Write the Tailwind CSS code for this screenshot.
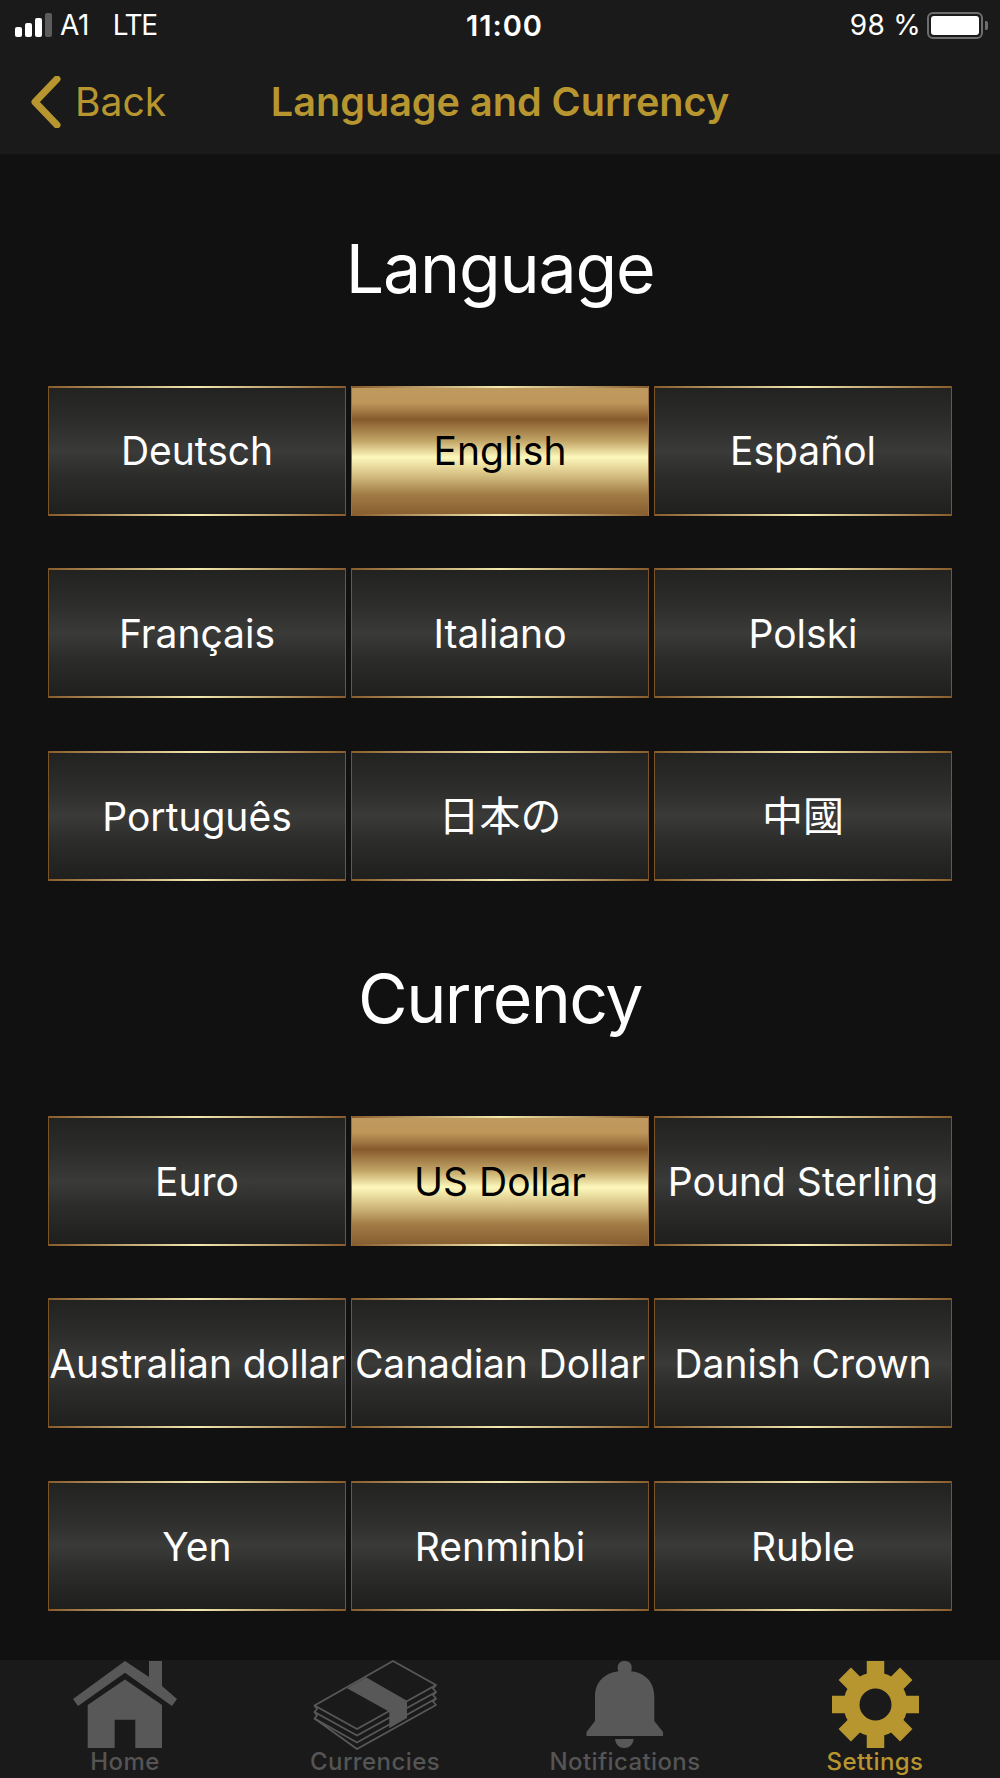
<!DOCTYPE html>
<html lang="en">
<head>
    <meta charset="UTF-8">
    <meta name="viewport" content="width=device-width, initial-scale=1.0">
    <title>Language and Currency</title>
    <script src="https://cdn.jsdelivr.net/npm/@tailwindcss/browser@4"></script>
</head>
<body class="bg-[#111111] font-['Inter','Noto_Sans_CJK_JP',sans-serif] text-white">
    <div class="w-[1000px] h-[1778px] flex flex-col overflow-hidden">
        <!-- Status bar + nav -->
        <header class="h-[154px] shrink-0 bg-[#1a1a1a]">
            <div class="h-[50px] grid grid-cols-[1fr_auto_1fr] items-center pl-[15px] pr-[12px]">
                <div class="flex items-center">
                    <div class="flex items-end gap-[3px] h-[24px] mb-[1px]">
                        <span class="w-[7px] h-[10px] bg-white rounded-[2px]"></span>
                        <span class="w-[7px] h-[14px] bg-white rounded-[2px]"></span>
                        <span class="w-[7px] h-[19px] bg-white rounded-[2px]"></span>
                        <span class="w-[7px] h-[24px] bg-[#5c5c5c] rounded-[2px]"></span>
                    </div>
                    <span class="ml-[8px] text-[28px] leading-none tracking-[-0.5px]">A1</span>
                    <span class="ml-[24px] text-[28px] leading-none tracking-[-1.4px]">LTE</span>
                </div>
                <div class="ml-[6px] text-[29px] leading-none font-semibold tracking-[1px]">11:00</div>
                <div class="flex items-center justify-end">
                    <span class="text-[28px] leading-none tracking-[0.3px]">98 %</span>
                    <div class="ml-[6px] w-[56px] h-[27px] border-[2px] border-[#6e6e6e] rounded-[6px] p-[2px]">
                        <div class="w-full h-full bg-white rounded-[3px]"></div>
                    </div>
                    <div class="ml-[2px] w-[3px] h-[9px] bg-[#6e6e6e] rounded-r-[2px]"></div>
                </div>
            </div>
            <div class="h-[104px] grid grid-cols-[1fr_auto_1fr] items-center text-[#b8962f] text-[39px] leading-none">
                <div class="flex items-center pl-[30px]">
                    <svg class="w-[34px] h-[52px]" viewBox="0 0 34 52" fill="none" stroke="#b8962f" stroke-width="7" stroke-linecap="round" stroke-linejoin="round"><path d="M27 3 L5 26 L27 49"/></svg>
                    <span class="ml-[11px] -mt-[1px]">Back</span>
                </div>
                <div class="mt-[1px] text-[39.6px] font-semibold">Language and Currency</div>
                <div></div>
            </div>
        </header>

        <main class="flex-1">
            <h2 class="h-[231.7px] pb-[3px] flex items-center justify-center text-[68px] leading-none font-normal tracking-[-1.2px]">Language</h2>
            <div class="grid grid-cols-3 gap-x-[5px] gap-y-[52.6px] px-[48px] [&>div>div]:pt-[2px]">
                <div class="h-[130px] border-x border-[#7c5428] bg-[linear-gradient(90deg,#8a5c2c,#f3eab0_50%,#8a5c2c)] py-[2px]"><div class="h-full flex items-center justify-center whitespace-nowrap text-[39px] bg-[linear-gradient(180deg,#222221,#2e2e2d_30%,#3a3a39_50%,#2c2c2b_70%,#1f1f1e)]">Deutsch</div></div>
                <div class="h-[130px] border-x border-[#9a7040] bg-[linear-gradient(90deg,#8a5c2c,#f3eab0_50%,#8a5c2c)] py-[2px]"><div class="h-full flex items-center justify-center whitespace-nowrap text-[39px] text-black bg-[linear-gradient(180deg,#bf9a5e,#bd965a_12%,#875a2c_25%,#c2a566_42%,#fdf8bc_55%,#d9c486_68%,#a07a44_85%,#875f32)]">English</div></div>
                <div class="h-[130px] border-x border-[#7c5428] bg-[linear-gradient(90deg,#8a5c2c,#f3eab0_50%,#8a5c2c)] py-[2px]"><div class="h-full flex items-center justify-center whitespace-nowrap text-[39px] bg-[linear-gradient(180deg,#222221,#2e2e2d_30%,#3a3a39_50%,#2c2c2b_70%,#1f1f1e)]">Español</div></div>
                <div class="h-[130px] border-x border-[#7c5428] bg-[linear-gradient(90deg,#8a5c2c,#f3eab0_50%,#8a5c2c)] py-[2px]"><div class="h-full flex items-center justify-center whitespace-nowrap text-[39px] bg-[linear-gradient(180deg,#222221,#2e2e2d_30%,#3a3a39_50%,#2c2c2b_70%,#1f1f1e)]">Français</div></div>
                <div class="h-[130px] border-x border-[#7c5428] bg-[linear-gradient(90deg,#8a5c2c,#f3eab0_50%,#8a5c2c)] py-[2px]"><div class="h-full flex items-center justify-center whitespace-nowrap text-[39px] bg-[linear-gradient(180deg,#222221,#2e2e2d_30%,#3a3a39_50%,#2c2c2b_70%,#1f1f1e)]">Italiano</div></div>
                <div class="h-[130px] border-x border-[#7c5428] bg-[linear-gradient(90deg,#8a5c2c,#f3eab0_50%,#8a5c2c)] py-[2px]"><div class="h-full flex items-center justify-center whitespace-nowrap text-[39px] bg-[linear-gradient(180deg,#222221,#2e2e2d_30%,#3a3a39_50%,#2c2c2b_70%,#1f1f1e)]">Polski</div></div>
                <div class="h-[130px] border-x border-[#7c5428] bg-[linear-gradient(90deg,#8a5c2c,#f3eab0_50%,#8a5c2c)] py-[2px]"><div class="h-full flex items-center justify-center whitespace-nowrap text-[39px] bg-[linear-gradient(180deg,#222221,#2e2e2d_30%,#3a3a39_50%,#2c2c2b_70%,#1f1f1e)]">Português</div></div>
                <div class="h-[130px] border-x border-[#7c5428] bg-[linear-gradient(90deg,#8a5c2c,#f3eab0_50%,#8a5c2c)] py-[2px]"><div lang="ja" class="h-full flex items-center justify-center whitespace-nowrap text-[41px] bg-[linear-gradient(180deg,#222221,#2e2e2d_30%,#3a3a39_50%,#2c2c2b_70%,#1f1f1e)]">日本の</div></div>
                <div class="h-[130px] border-x border-[#7c5428] bg-[linear-gradient(90deg,#8a5c2c,#f3eab0_50%,#8a5c2c)] py-[2px]"><div lang="zh-Hant" class="h-full flex items-center justify-center whitespace-nowrap text-[41px] bg-[linear-gradient(180deg,#222221,#2e2e2d_30%,#3a3a39_50%,#2c2c2b_70%,#1f1f1e)]">中國</div></div>
            </div>

            <h2 class="h-[235px] flex items-center justify-center text-[68px] leading-none font-normal tracking-[-1.6px]">Currency</h2>
            <div class="grid grid-cols-3 gap-x-[5px] gap-y-[52.6px] px-[48px] [&>div>div]:pt-[2px]">
                <div class="h-[130px] border-x border-[#7c5428] bg-[linear-gradient(90deg,#8a5c2c,#f3eab0_50%,#8a5c2c)] py-[2px]"><div class="h-full flex items-center justify-center whitespace-nowrap text-[39px] bg-[linear-gradient(180deg,#222221,#2e2e2d_30%,#3a3a39_50%,#2c2c2b_70%,#1f1f1e)]">Euro</div></div>
                <div class="h-[130px] border-x border-[#9a7040] bg-[linear-gradient(90deg,#8a5c2c,#f3eab0_50%,#8a5c2c)] py-[2px]"><div class="h-full flex items-center justify-center whitespace-nowrap text-[39px] text-black bg-[linear-gradient(180deg,#bf9a5e,#bd965a_12%,#875a2c_25%,#c2a566_42%,#fdf8bc_55%,#d9c486_68%,#a07a44_85%,#875f32)]">US Dollar</div></div>
                <div class="h-[130px] border-x border-[#7c5428] bg-[linear-gradient(90deg,#8a5c2c,#f3eab0_50%,#8a5c2c)] py-[2px]"><div class="h-full flex items-center justify-center whitespace-nowrap text-[39px] bg-[linear-gradient(180deg,#222221,#2e2e2d_30%,#3a3a39_50%,#2c2c2b_70%,#1f1f1e)]">Pound Sterling</div></div>
                <div class="h-[130px] border-x border-[#7c5428] bg-[linear-gradient(90deg,#8a5c2c,#f3eab0_50%,#8a5c2c)] py-[2px]"><div class="h-full flex items-center justify-center whitespace-nowrap text-[39px] tracking-[-0.1px] bg-[linear-gradient(180deg,#222221,#2e2e2d_30%,#3a3a39_50%,#2c2c2b_70%,#1f1f1e)]">Australian dollar</div></div>
                <div class="h-[130px] border-x border-[#7c5428] bg-[linear-gradient(90deg,#8a5c2c,#f3eab0_50%,#8a5c2c)] py-[2px]"><div class="h-full flex items-center justify-center whitespace-nowrap text-[39px] tracking-[-0.1px] bg-[linear-gradient(180deg,#222221,#2e2e2d_30%,#3a3a39_50%,#2c2c2b_70%,#1f1f1e)]">Canadian Dollar</div></div>
                <div class="h-[130px] border-x border-[#7c5428] bg-[linear-gradient(90deg,#8a5c2c,#f3eab0_50%,#8a5c2c)] py-[2px]"><div class="h-full flex items-center justify-center whitespace-nowrap text-[39px] bg-[linear-gradient(180deg,#222221,#2e2e2d_30%,#3a3a39_50%,#2c2c2b_70%,#1f1f1e)]">Danish Crown</div></div>
                <div class="h-[130px] border-x border-[#7c5428] bg-[linear-gradient(90deg,#8a5c2c,#f3eab0_50%,#8a5c2c)] py-[2px]"><div class="h-full flex items-center justify-center whitespace-nowrap text-[39px] bg-[linear-gradient(180deg,#222221,#2e2e2d_30%,#3a3a39_50%,#2c2c2b_70%,#1f1f1e)]">Yen</div></div>
                <div class="h-[130px] border-x border-[#7c5428] bg-[linear-gradient(90deg,#8a5c2c,#f3eab0_50%,#8a5c2c)] py-[2px]"><div class="h-full flex items-center justify-center whitespace-nowrap text-[39px] bg-[linear-gradient(180deg,#222221,#2e2e2d_30%,#3a3a39_50%,#2c2c2b_70%,#1f1f1e)]">Renminbi</div></div>
                <div class="h-[130px] border-x border-[#7c5428] bg-[linear-gradient(90deg,#8a5c2c,#f3eab0_50%,#8a5c2c)] py-[2px]"><div class="h-full flex items-center justify-center whitespace-nowrap text-[39px] bg-[linear-gradient(180deg,#222221,#2e2e2d_30%,#3a3a39_50%,#2c2c2b_70%,#1f1f1e)]">Ruble</div></div>
            </div>
        </main>

        <!-- Tab bar -->
        <nav class="h-[118px] shrink-0 bg-[#1a1a1a] grid grid-cols-4 text-[#555555] text-[24px] font-medium leading-none tracking-[0.4px]">
            <div class="flex flex-col items-center pt-[1px]">
                <svg class="w-[104px] h-[87px]" viewBox="0 0 104 87" fill="#585858">
                    <path d="M52 0 L76 16 L76 0 L89 0 L89 25 L104 38 L99 45 L52 11.7 L5 45 L0 38 Z"/>
                    <path d="M52 18.5 L89 44 L89 87 L62.3 87 L62.3 58.7 L41.7 58.7 L41.7 87 L14.7 87 L14.7 44 Z"/>
                </svg>
                <span class="mt-[2px]">Home</span>
            </div>
            <div class="flex flex-col items-center">
                <svg class="w-[124px] h-[90px]" viewBox="0 0 124 90" fill="none" stroke="#585858" stroke-width="1.8" stroke-linejoin="round">
                    <path d="M80 1 L123 25 L44 69 L1.5 45.5 Z" fill="#1a1a1a"/>
                    <path d="M1.5 45.5 L4 49 L1.5 52 L44 75.5 L123 32 L120 28.5 L123 25"/>
                    <path d="M1.5 52 L4 55.5 L1.5 58.5 L44 82.5 L123 38.5 L120 35 L123 32"/>
                    <path d="M1.5 58.5 L44 89 L123 45 L120 41.5 L123 38.5"/>
                    <path d="M34 28.3 L53 17.3 L94 40.7 L94 58 L76.3 68.3 L76.3 51.7 Z" fill="#585858" stroke="none"/>
                </svg>
                <span class="mt-0">Currencies</span>
            </div>
            <div class="flex flex-col items-center pt-[1px]">
                <svg class="w-[78px] h-[87px]" viewBox="0 0 78 87" fill="#585858">
                    <rect x="31.7" y="0" width="14" height="14" rx="6"/>
                    <path d="M9 36 C9 18 22 9.7 39 9.7 C56 9.7 68.3 18 68.3 36 L68.3 60 L77 71 L77 75 L0.5 75 L0.5 71 L9 60 Z"/>
                    <path d="M29 78 L47.7 78 C47 84 43 87 38.3 87 C33.6 87 29.7 84 29 78 Z"/>
                </svg>
                <span class="mt-[2px]">Notifications</span>
            </div>
            <div class="flex flex-col items-center text-[#b8962f] pt-[1px]">
                <svg class="w-[87px] h-[87px]" viewBox="-43.5 -43.5 87 87" fill="#b8962f">
                    <circle r="24" fill="none" stroke="#b8962f" stroke-width="16"/>
                    <rect x="-8.75" y="-43.5" width="17.5" height="18"/>
                    <rect x="-8.75" y="-43.5" width="17.5" height="18" transform="rotate(45)"/>
                    <rect x="-8.75" y="-43.5" width="17.5" height="18" transform="rotate(90)"/>
                    <rect x="-8.75" y="-43.5" width="17.5" height="18" transform="rotate(135)"/>
                    <rect x="-8.75" y="-43.5" width="17.5" height="18" transform="rotate(180)"/>
                    <rect x="-8.75" y="-43.5" width="17.5" height="18" transform="rotate(225)"/>
                    <rect x="-8.75" y="-43.5" width="17.5" height="18" transform="rotate(270)"/>
                    <rect x="-8.75" y="-43.5" width="17.5" height="18" transform="rotate(315)"/>
                </svg>
                <span class="mt-[2px]">Settings</span>
            </div>
        </nav>
    </div>
</body>
</html>
